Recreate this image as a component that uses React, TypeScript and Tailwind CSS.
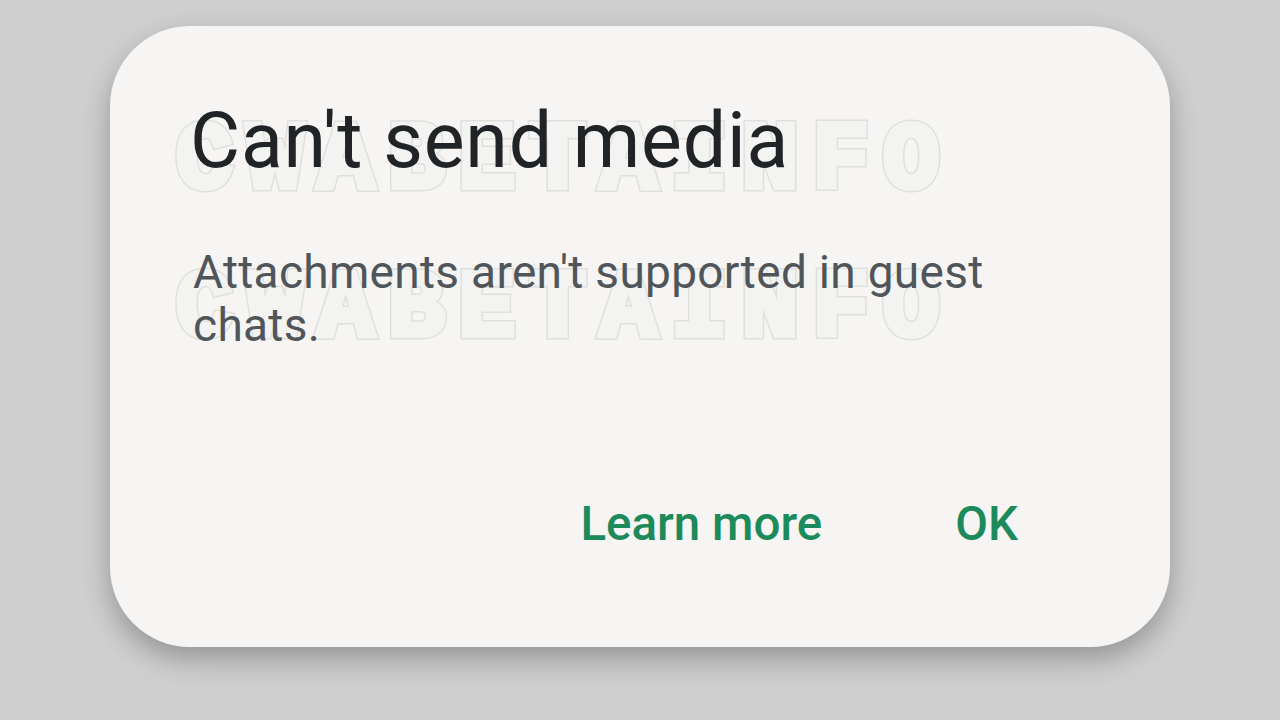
import React from "react";

function Watermark() {
  return (
    <div className="grid">
      <span className="col-start-1 row-start-1 font-['Liberation_Mono',monospace] font-bold text-[94px] leading-[86px] tracking-[14.3px] text-[#f3f3f2] [-webkit-text-stroke:9px_#dfdfde]">CWABETAINFO</span>
      <span className="col-start-1 row-start-1 font-['Liberation_Mono',monospace] font-bold text-[94px] leading-[86px] tracking-[14.3px] text-[#f3f3f2] [-webkit-text-stroke:6px_#f3f3f2]">CWABETAINFO</span>
    </div>
  );
}

export default function App() {
  return (
    <div className="w-[1280px] h-[720px] bg-[#cfcfcf] overflow-hidden pt-[26px] pl-[110px]">
      <div className="relative w-[1060px] h-[621px] rounded-[80px] bg-[#f6f5f3] shadow-[0_12px_28px_rgba(0,0,0,0.28)] pl-[80px] pt-[70px] pr-[152px] flex flex-col font-['Roboto',sans-serif]">
        <div className="absolute left-[66px] top-[93px] flex flex-col gap-[62px] pointer-events-none select-none">
          <Watermark />
          <Watermark />
        </div>
        <h1 className="relative text-[77px] leading-[90px] font-normal tracking-[0.8px] text-[#202427]">Can't send media</h1>
        <p className="relative mt-[60px] ml-[3px] text-[46px] leading-[53px] tracking-[0.3px] text-[#50555a] w-[820px]">
          Attachments aren't supported in guest chats.
        </p>
        <div className="relative mt-[144px] flex justify-end items-center gap-[133px]">
          <span className="text-[47.5px] leading-[56px] font-medium text-[#1c8a5a]">Learn more</span>
          <span className="text-[47.5px] leading-[56px] font-medium text-[#1c8a5a]">OK</span>
        </div>
      </div>
    </div>
  );
}
